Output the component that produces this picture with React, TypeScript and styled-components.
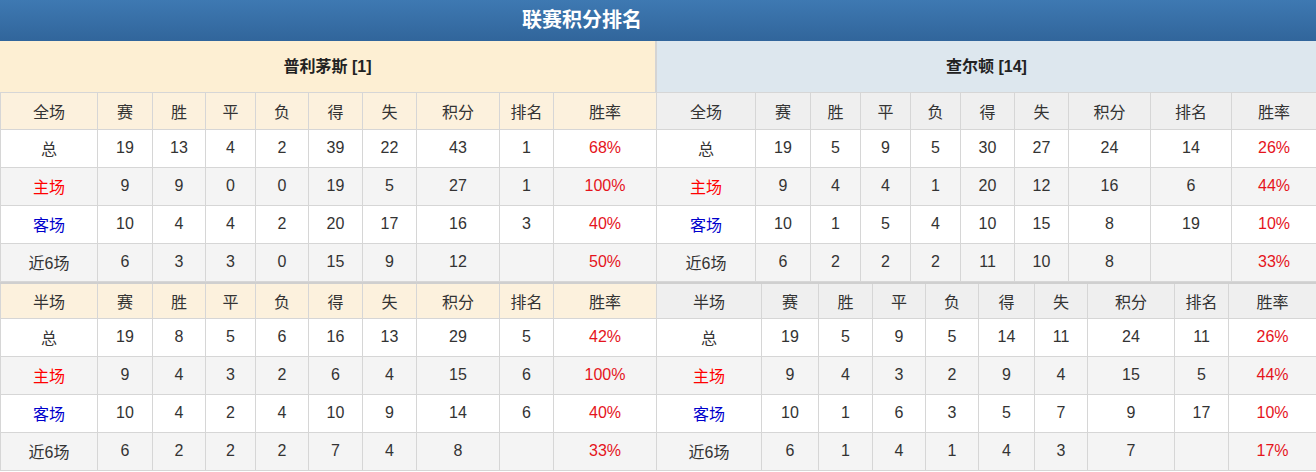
import styled, { createGlobalStyle } from 'styled-components';

const GlobalStyle = createGlobalStyle`
  body {
    margin: 0;
    background: #fff;
    font-family: "Liberation Sans", "Noto Sans CJK SC", sans-serif;
    color: #333;
  }
`;

const Wrapper = styled.div`
  width: 1316px;
`;

const Title = styled.div`
  height: 41px;
  line-height: 41px;
  padding-right: 152px;
  text-align: center;
  font-size: 20px;
  font-weight: bold;
  color: #fff;
  background: linear-gradient(#3e79b2, #31659b);
`;

const Panels = styled.div`
  display: grid;
  grid-template-columns: 656px 660px;
`;

const Panel = styled.div`
  display: flex;
  flex-direction: column;
`;

const TeamHeader = styled.div<{ $away?: boolean }>`
  height: 51px;
  line-height: 51px;
  text-align: center;
  font-size: 16px;
  font-weight: bold;
  color: #222;
  background: ${(p) => (p.$away ? '#dde7ee' : '#fdefd3')};
  border-right: ${(p) => (p.$away ? 'none' : '1px solid #d4d4d4')};
  border-left: ${(p) => (p.$away ? '1px solid #d4d4d4' : 'none')};
`;

const Table = styled.table<{ $split?: boolean }>`
  width: 100%;
  table-layout: fixed;
  border-collapse: collapse;
  font-size: 16px;
  border-top: ${(p) => (p.$split ? '2px solid #cfcfcf' : 'none')};
`;

const Col = styled.col<{ $w: number }>`
  width: ${(p) => p.$w}px;
`;

const HeadCell = styled.th<{ $away?: boolean; $split?: boolean }>`
  height: ${(p) => (p.$split ? 33 : 35)}px;
  padding: 0 0 1px;
  font-weight: normal;
  color: #333;
  text-align: center;
  background: ${(p) => (p.$away ? '#efefef' : '#fcf1dd')};
  border: 1px solid #d6d6d6;
`;

const Row = styled.tr<{ $shade?: boolean }>`
  background: ${(p) => (p.$shade ? '#f4f4f4' : '#fff')};
`;

const Cell = styled.td<{ $tone?: 'red' | 'blue' | 'rate' }>`
  height: 35px;
  padding: 0 0 2px;
  text-align: center;
  border: 1px solid #d6d6d6;
  color: ${(p) =>
    p.$tone === 'red' ? '#f00' : p.$tone === 'blue' ? '#0000cc' : p.$tone === 'rate' ? '#e5141c' : '#333'};
`;

type Line = (string | number)[];

const labels = ['赛', '胜', '平', '负', '得', '失', '积分', '排名', '胜率'];

const tones: Record<string, 'red' | 'blue' | undefined> = {
  主场: 'red',
  客场: 'blue',
};

function StatsTable({
  kind,
  widths,
  rows,
  away,
  split,
}: {
  kind: string;
  widths: number[];
  rows: Line[];
  away?: boolean;
  split?: boolean;
}) {
  return (
    <Table $split={split}>
      <colgroup>
        {widths.map((w, i) => (
          <Col key={i} $w={w} />
        ))}
      </colgroup>
      <thead>
        <tr>
          <HeadCell $away={away} $split={split}>
            {kind}
          </HeadCell>
          {labels.map((l) => (
            <HeadCell key={l} $away={away} $split={split}>
              {l}
            </HeadCell>
          ))}
        </tr>
      </thead>
      <tbody>
        {rows.map((r) => {
          const name = String(r[0]);
          return (
            <Row key={name} $shade={name === '主场' || name === '近6场'}>
              <Cell $tone={tones[name]}>{name}</Cell>
              {r.slice(1, -1).map((v, i) => (
                <Cell key={i}>{v}</Cell>
              ))}
              <Cell $tone="rate">{r[r.length - 1]}</Cell>
            </Row>
          );
        })}
      </tbody>
    </Table>
  );
}

const home = {
  name: '普利茅斯 [1]',
  full: [
    ['总', 19, 13, 4, 2, 39, 22, 43, 1, '68%'],
    ['主场', 9, 9, 0, 0, 19, 5, 27, 1, '100%'],
    ['客场', 10, 4, 4, 2, 20, 17, 16, 3, '40%'],
    ['近6场', 6, 3, 3, 0, 15, 9, 12, '', '50%'],
  ],
  half: [
    ['总', 19, 8, 5, 6, 16, 13, 29, 5, '42%'],
    ['主场', 9, 4, 3, 2, 6, 4, 15, 6, '100%'],
    ['客场', 10, 4, 2, 4, 10, 9, 14, 6, '40%'],
    ['近6场', 6, 2, 2, 2, 7, 4, 8, '', '33%'],
  ],
  fullWidths: [97, 55, 53, 50, 53, 54, 54, 83, 54, 103],
  halfWidths: [97, 55, 53, 50, 53, 54, 54, 83, 54, 103],
};

const away = {
  name: '查尔顿 [14]',
  full: [
    ['总', 19, 5, 9, 5, 30, 27, 24, 14, '26%'],
    ['主场', 9, 4, 4, 1, 20, 12, 16, 6, '44%'],
    ['客场', 10, 1, 5, 4, 10, 15, 8, 19, '10%'],
    ['近6场', 6, 2, 2, 2, 11, 10, 8, '', '33%'],
  ],
  half: [
    ['总', 19, 5, 9, 5, 14, 11, 24, 11, '26%'],
    ['主场', 9, 4, 3, 2, 9, 4, 15, 5, '44%'],
    ['客场', 10, 1, 6, 3, 5, 7, 9, 17, '10%'],
    ['近6场', 6, 1, 4, 1, 4, 3, 7, '', '17%'],
  ],
  fullWidths: [99, 55, 50, 50, 50, 54, 54, 82, 81, 85],
  halfWidths: [105, 57, 54, 53, 53, 56, 53, 87, 54, 88],
};

export default function App() {
  return (
    <Wrapper>
      <GlobalStyle />
      <Title>联赛积分排名</Title>
      <Panels>
        <Panel>
          <TeamHeader>{home.name}</TeamHeader>
          <StatsTable kind="全场" widths={home.fullWidths} rows={home.full} />
          <StatsTable kind="半场" widths={home.halfWidths} rows={home.half} split />
        </Panel>
        <Panel>
          <TeamHeader $away>{away.name}</TeamHeader>
          <StatsTable kind="全场" widths={away.fullWidths} rows={away.full} away />
          <StatsTable kind="半场" widths={away.halfWidths} rows={away.half} away split />
        </Panel>
      </Panels>
    </Wrapper>
  );
}
